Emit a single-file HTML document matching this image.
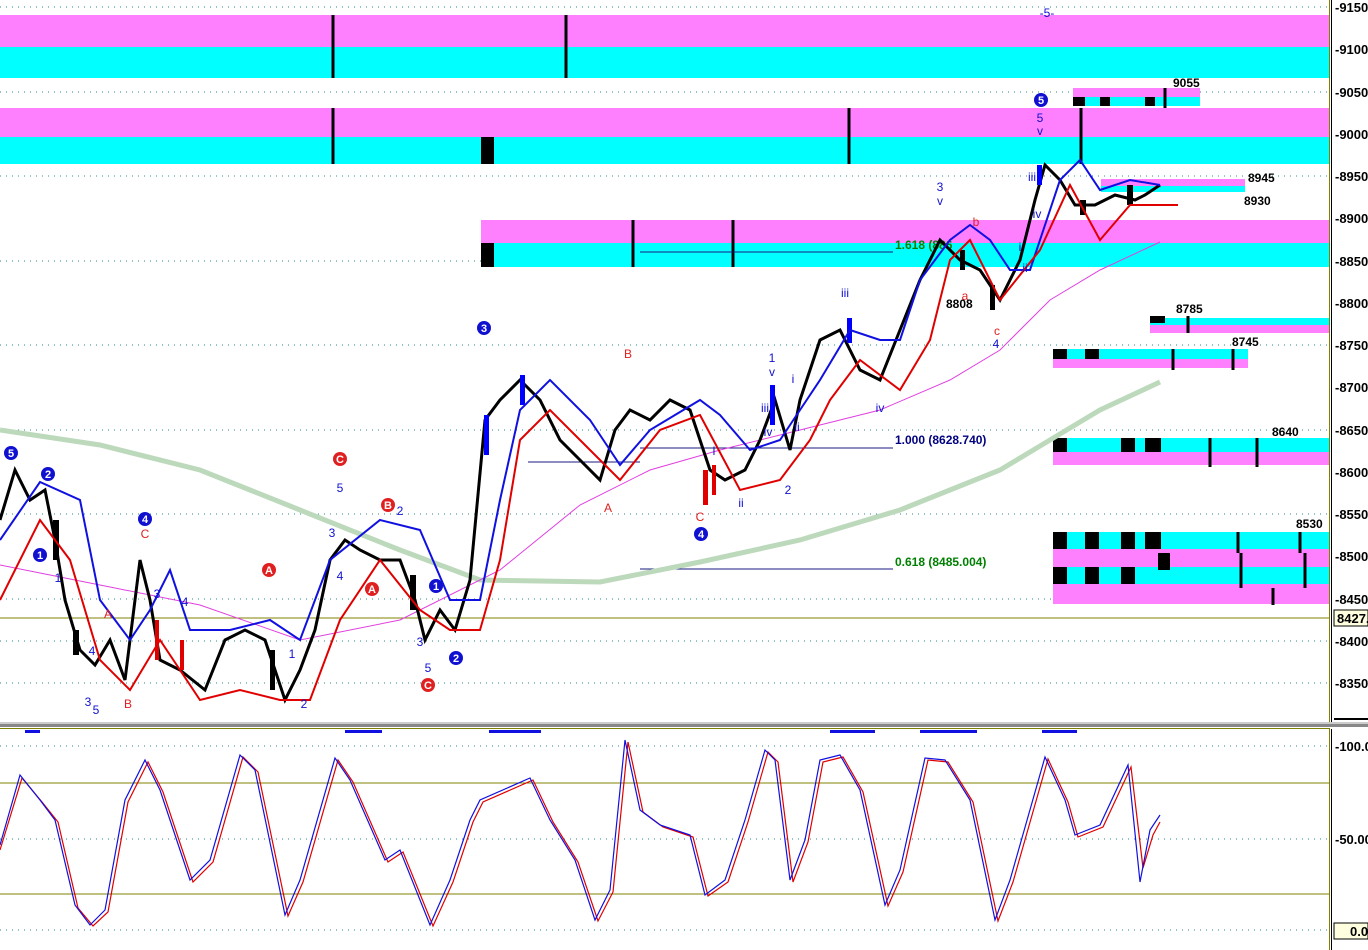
<!DOCTYPE html>
<html><head><meta charset="utf-8"><style>
html,body{margin:0;padding:0;background:#fff;width:1368px;height:950px;overflow:hidden}
svg{display:block}
text{font-family:"Liberation Sans",sans-serif}
</style></head><body>
<svg width="1368" height="950" viewBox="0 0 1368 950" xmlns="http://www.w3.org/2000/svg">
<rect width="1368" height="950" fill="#fff"/>
<g stroke="#2a8a8a" stroke-dasharray="1,5" stroke-width="1">
<line x1="0" y1="7" x2="1330" y2="7"/><line x1="0" y1="92" x2="1330" y2="92"/><line x1="0" y1="176" x2="1330" y2="176"/>
<line x1="0" y1="261" x2="1330" y2="261"/><line x1="0" y1="345" x2="1330" y2="345"/><line x1="0" y1="430" x2="1330" y2="430"/>
<line x1="0" y1="514" x2="1330" y2="514"/><line x1="0" y1="599" x2="1330" y2="599"/><line x1="0" y1="641" x2="1330" y2="641"/><line x1="0" y1="683" x2="1330" y2="683"/>
<line x1="0" y1="746" x2="1330" y2="746"/><line x1="0" y1="839" x2="1330" y2="839"/><line x1="0" y1="930" x2="1330" y2="930"/>
</g>
<rect x="0" y="15" width="1330" height="32" fill="#ff80ff"/><rect x="0" y="47" width="1330" height="31" fill="#00ffff"/>
<rect x="0" y="108" width="1330" height="29" fill="#ff80ff"/><rect x="0" y="137" width="1330" height="27" fill="#00ffff"/>
<rect x="481" y="220" width="849" height="23" fill="#ff80ff"/><rect x="481" y="243" width="849" height="24" fill="#00ffff"/>
<rect x="481" y="137" width="13" height="27" fill="#000"/><rect x="481" y="243" width="13" height="24" fill="#000"/>
<rect x="1073" y="88" width="127" height="9" fill="#ff80ff"/><rect x="1073" y="97" width="127" height="9" fill="#00ffff"/>
<rect x="1073" y="97" width="12" height="9" fill="#000"/><rect x="1100" y="97" width="10" height="9" fill="#000"/><rect x="1145" y="97" width="10" height="9" fill="#000"/>
<rect x="1101" y="179" width="144" height="7" fill="#ff80ff"/><rect x="1101" y="186" width="144" height="6" fill="#00ffff"/>
<rect x="1150" y="318" width="180" height="7" fill="#00ffff"/><rect x="1150" y="325" width="180" height="8" fill="#ff80ff"/><rect x="1150" y="316" width="15" height="7" fill="#000"/>
<rect x="1053" y="349" width="195" height="10" fill="#00ffff"/><rect x="1053" y="359" width="195" height="9" fill="#ff80ff"/>
<rect x="1053" y="349" width="14" height="10" fill="#000"/><rect x="1085" y="349" width="14" height="10" fill="#000"/>
<rect x="1053" y="438" width="277" height="14" fill="#00ffff"/><rect x="1053" y="452" width="277" height="13" fill="#ff80ff"/>
<rect x="1053" y="438" width="14" height="14" fill="#000"/><rect x="1121" y="438" width="14" height="14" fill="#000"/><rect x="1145" y="438" width="16" height="14" fill="#000"/>
<rect x="1053" y="532" width="277" height="17" fill="#00ffff"/><rect x="1053" y="549" width="277" height="18" fill="#ff80ff"/>
<rect x="1053" y="567" width="277" height="17" fill="#00ffff"/><rect x="1053" y="584" width="277" height="20" fill="#ff80ff"/>
<g fill="#000"><rect x="1053" y="532" width="14" height="17"/><rect x="1085" y="532" width="14" height="17"/><rect x="1121" y="532" width="14" height="17"/><rect x="1145" y="532" width="16" height="17"/>
<rect x="1053" y="567" width="14" height="17"/><rect x="1085" y="567" width="14" height="17"/><rect x="1121" y="567" width="14" height="17"/><rect x="1158" y="553" width="12" height="17"/></g>
<g stroke="#000" stroke-width="3">
<line x1="333" y1="15" x2="333" y2="78"/><line x1="333" y1="108" x2="333" y2="164"/><line x1="566" y1="15" x2="566" y2="78"/>
<line x1="849" y1="108" x2="849" y2="164"/><line x1="1081" y1="108" x2="1081" y2="164"/><line x1="633" y1="220" x2="633" y2="267"/><line x1="733" y1="220" x2="733" y2="267"/>
<line x1="1165" y1="88" x2="1165" y2="108"/><line x1="1188" y1="316" x2="1188" y2="333"/><line x1="1173" y1="349" x2="1173" y2="370"/><line x1="1233" y1="349" x2="1233" y2="370"/>
<line x1="1210" y1="438" x2="1210" y2="467"/><line x1="1257" y1="438" x2="1257" y2="467"/><line x1="1238" y1="532" x2="1238" y2="553"/><line x1="1300" y1="532" x2="1300" y2="553"/><line x1="1241" y1="553" x2="1241" y2="588"/><line x1="1305" y1="553" x2="1305" y2="588"/><line x1="1273" y1="588" x2="1273" y2="605"/>
</g>
<g stroke="#1a1a80" stroke-width="1"><line x1="640" y1="252" x2="893" y2="252"/><line x1="640" y1="448" x2="893" y2="448"/><line x1="528" y1="462" x2="640" y2="462"/><line x1="640" y1="569" x2="893" y2="569"/></g>
<text x="895" y="249" font-size="12" font-weight="bold" fill="#008000">1.618 (886</text>
<text x="895" y="444" font-size="12" font-weight="bold" fill="#000080">1.000 (8628.740)</text>
<text x="895" y="566" font-size="12" font-weight="bold" fill="#008000">0.618 (8485.004)</text>
<line x1="0" y1="618" x2="1330" y2="618" stroke="#808000" stroke-width="1"/>
<polyline fill="none" stroke="#bcd9bc" stroke-width="5" points="0,430 100,445 200,470 300,510 400,550 480,580 600,582 700,562 800,540 900,510 1000,470 1050,440 1100,410 1160,382"/>
<polyline fill="none" stroke="#e040e0" stroke-width="1" points="0,565 100,585 200,605 300,640 400,620 500,570 580,505 650,470 720,450 800,430 880,410 950,380 1000,350 1050,300 1100,270 1160,242"/>
<polyline fill="none" stroke="#000" stroke-width="3" points="0,520 15,470 30,500 45,490 55,540 65,600 80,650 95,665 110,640 125,680 140,560 150,600 160,660 180,670 205,690 225,640 245,630 265,640 285,700 300,670 315,630 330,560 345,540 360,550 380,560 400,560 415,600 425,640 440,610 455,630 470,580 485,420 500,400 520,380 540,400 560,440 580,460 600,480 615,430 630,410 650,420 670,400 690,410 710,470 725,480 745,470 760,440 775,400 790,450 800,400 820,340 840,330 860,370 880,380 900,330 920,280 940,240 960,260 980,270 1000,300 1020,260 1035,200 1045,165 1060,180 1075,205 1095,205 1115,195 1135,200 1145,195 1160,185"/>
<g fill="#000"><rect x="53" y="520" width="6" height="40"/><rect x="73" y="630" width="6" height="25"/><rect x="270" y="650" width="5" height="40"/><rect x="410" y="575" width="6" height="35"/><rect x="1127" y="185" width="6" height="20"/><rect x="1080" y="200" width="6" height="15"/><rect x="960" y="250" width="5" height="20"/><rect x="990" y="285" width="5" height="25"/></g>
<g fill="#0000ff"><rect x="484" y="415" width="5" height="40"/><rect x="520" y="375" width="5" height="30"/><rect x="770" y="385" width="5" height="40"/><rect x="847" y="318" width="5" height="25"/><rect x="1037" y="165" width="5" height="20"/></g>
<g fill="#e00000"><rect x="703" y="470" width="5" height="35"/><rect x="712" y="465" width="4" height="30"/><rect x="155" y="620" width="4" height="40"/><rect x="180" y="640" width="4" height="30"/></g>
<polyline fill="none" stroke="#1010e0" stroke-width="2" points="0,540 40,482 80,500 100,600 130,640 150,610 170,570 190,630 230,630 270,620 300,640 330,560 380,520 420,530 450,600 480,600 500,500 520,410 550,380 590,420 620,465 650,430 700,400 720,415 750,450 780,440 800,410 820,380 850,330 880,340 900,340 920,280 950,240 970,225 990,240 1010,270 1030,270 1060,180 1080,160 1100,190 1130,180 1160,185"/>
<polyline fill="none" stroke="#e00000" stroke-width="2" points="0,600 40,520 70,560 100,660 130,690 160,640 200,700 240,690 280,700 310,700 340,620 380,560 420,610 450,630 480,630 500,560 520,440 550,410 590,450 620,480 660,430 700,415 740,490 780,480 810,440 830,400 860,360 900,390 930,340 950,260 970,240 1000,300 1040,250 1070,185 1100,240 1130,205 1160,205 1178,205"/>
<g font-size="11" font-weight="bold" text-anchor="middle" fill="#fff">
<circle cx="11" cy="453" r="7" fill="#1010d0"/><text x="11" y="457">5</text>
<circle cx="48" cy="474" r="7" fill="#1010d0"/><text x="48" y="478">2</text>
<circle cx="40" cy="555" r="7" fill="#1010d0"/><text x="40" y="559">1</text>
<circle cx="145" cy="519" r="7" fill="#1010d0"/><text x="145" y="523">4</text>
<circle cx="484" cy="328" r="7" fill="#1010d0"/><text x="484" y="332">3</text>
<circle cx="436" cy="586" r="7" fill="#1010d0"/><text x="436" y="590">1</text>
<circle cx="456" cy="658" r="7" fill="#1010d0"/><text x="456" y="662">2</text>
<circle cx="701" cy="534" r="7" fill="#1010d0"/><text x="701" y="538">4</text>
<circle cx="1041" cy="100" r="7" fill="#1010d0"/><text x="1041" y="104">5</text>
<circle cx="340" cy="459" r="7" fill="#e02020"/><text x="340" y="463">C</text>
<circle cx="269" cy="570" r="7" fill="#e02020"/><text x="269" y="574">A</text>
<circle cx="388" cy="505" r="7" fill="#e02020"/><text x="388" y="509">B</text>
<circle cx="372" cy="589" r="7" fill="#e02020"/><text x="372" y="593">A</text>
<circle cx="428" cy="685" r="7" fill="#e02020"/><text x="428" y="689">C</text>
</g>
<g font-size="12" fill="#1010d0" text-anchor="middle">
<text x="340" y="492">5</text><text x="332" y="537">3</text><text x="340" y="580">4</text><text x="400" y="515">2</text><text x="420" y="646">3</text><text x="428" y="672">5</text>
<text x="58" y="582">1</text><text x="92" y="655">4</text><text x="88" y="706">3</text><text x="96" y="714">5</text><text x="157" y="598">3</text><text x="185" y="606">4</text><text x="292" y="658">1</text><text x="304" y="708">2</text>
<text x="772" y="362">1</text><text x="772" y="376">v</text><text x="765" y="412">iii</text><text x="768" y="436">iv</text><text x="793" y="383">i</text><text x="797" y="431">ii</text><text x="788" y="494">2</text><text x="741" y="507">ii</text><text x="714" y="455">i</text>
<text x="845" y="297">iii</text><text x="880" y="412">iv</text><text x="940" y="191">3</text><text x="940" y="205">v</text>
<text x="1040" y="122">5</text><text x="1040" y="135">v</text><text x="1032" y="181">iii</text><text x="1037" y="218">iv</text><text x="1020" y="251">i</text><text x="1025" y="272">ii</text><text x="996" y="348">4</text><text x="1047" y="17">-5-</text>
</g>
<g font-size="12" fill="#e02020" text-anchor="middle">
<text x="628" y="358">B</text><text x="608" y="512">A</text><text x="700" y="521">C</text><text x="145" y="538">C</text><text x="108" y="618">A</text><text x="128" y="708">B</text><text x="965" y="300">a</text><text x="976" y="226">b</text><text x="997" y="335">c</text>
</g>
<g font-size="12" font-weight="bold" fill="#000">
<text x="1173" y="87">9055</text><text x="1248" y="182">8945</text><text x="1244" y="205">8930</text><text x="946" y="308">8808</text>
<text x="1176" y="313">8785</text><text x="1232" y="346">8745</text><text x="1272" y="436">8640</text><text x="1296" y="528">8530</text>
</g>
<rect x="1329" y="0" width="1" height="727" fill="#808000"/><rect x="1331" y="0" width="1" height="727" fill="#000"/>
<rect x="1329" y="729" width="1" height="221" fill="#808000"/><rect x="1331" y="729" width="1" height="221" fill="#000"/>
<rect x="0" y="722" width="1368" height="2" fill="#ccc"/><rect x="0" y="724" width="1368" height="3" fill="#888"/>
<rect x="0" y="728" width="1330" height="1" fill="#808000"/>
<rect x="1334" y="718" width="34" height="2" fill="#000"/>
<g font-size="13" font-weight="bold" fill="#000">
<text x="1335" y="12">-9150</text><text x="1335" y="54">-9100</text><text x="1335" y="97">-9050</text><text x="1335" y="139">-9000</text>
<text x="1335" y="181">-8950</text><text x="1335" y="223">-8900</text><text x="1335" y="266">-8850</text><text x="1335" y="308">-8800</text>
<text x="1335" y="350">-8750</text><text x="1335" y="392">-8700</text><text x="1335" y="435">-8650</text><text x="1335" y="477">-8600</text>
<text x="1335" y="519">-8550</text><text x="1335" y="561">-8500</text><text x="1335" y="604">-8450</text><text x="1335" y="646">-8400</text><text x="1335" y="688">-8350</text>
<text x="1335" y="751">-100.0</text><text x="1335" y="844">-50.00</text>
</g>
<rect x="1334" y="610" width="34" height="16" fill="#ffffe0" stroke="#000"/><text x="1337" y="623" font-size="13" font-weight="bold">8427.</text>
<rect x="1334" y="923" width="34" height="16" fill="#ffffe0" stroke="#000"/><text x="1350" y="936" font-size="13" font-weight="bold">0.0</text>
<line x1="0" y1="783" x2="1330" y2="783" stroke="#808000"/><line x1="0" y1="894" x2="1330" y2="894" stroke="#808000"/>
<g fill="#1010e0"><rect x="25" y="730" width="15" height="3"/><rect x="345" y="730" width="37" height="3"/><rect x="489" y="730" width="52" height="3"/><rect x="830" y="730" width="45" height="3"/><rect x="920" y="730" width="57" height="3"/><rect x="1042" y="730" width="35" height="3"/></g>
<polyline fill="none" stroke="#e00000" stroke-width="1.2" points="0,850 22,778 42,802 58,822 78,908 93,926 108,912 128,802 148,762 163,792 193,882 213,862 243,757 258,772 288,916 303,882 338,760 353,782 388,862 403,852 433,926 453,882 473,822 483,802 533,780 553,822 578,862 598,921 613,892 628,742 643,812 663,827 693,837 708,896 728,882 748,822 768,752 778,762 793,882 808,842 823,762 843,757 863,792 888,906 903,872 928,760 948,762 973,802 998,921 1013,882 1048,759 1068,802 1078,837 1103,827 1131,767 1143,868 1153,835 1160,822"/>
<polyline fill="none" stroke="#1010e0" stroke-width="1.2" points="0,845 20,775 40,800 55,820 75,905 90,925 105,910 125,800 145,760 160,790 190,880 210,860 240,755 255,770 285,915 300,880 335,758 350,780 385,860 400,850 430,925 450,880 470,820 480,800 530,778 550,820 575,860 595,920 610,890 625,740 640,810 660,825 690,835 705,895 725,880 745,820 765,750 775,760 790,880 805,840 820,760 840,755 860,790 885,905 900,870 925,758 945,760 970,800 995,920 1010,880 1045,757 1065,800 1075,835 1100,825 1128,765 1140,882 1150,830 1160,815"/>
</svg>
</body></html>
